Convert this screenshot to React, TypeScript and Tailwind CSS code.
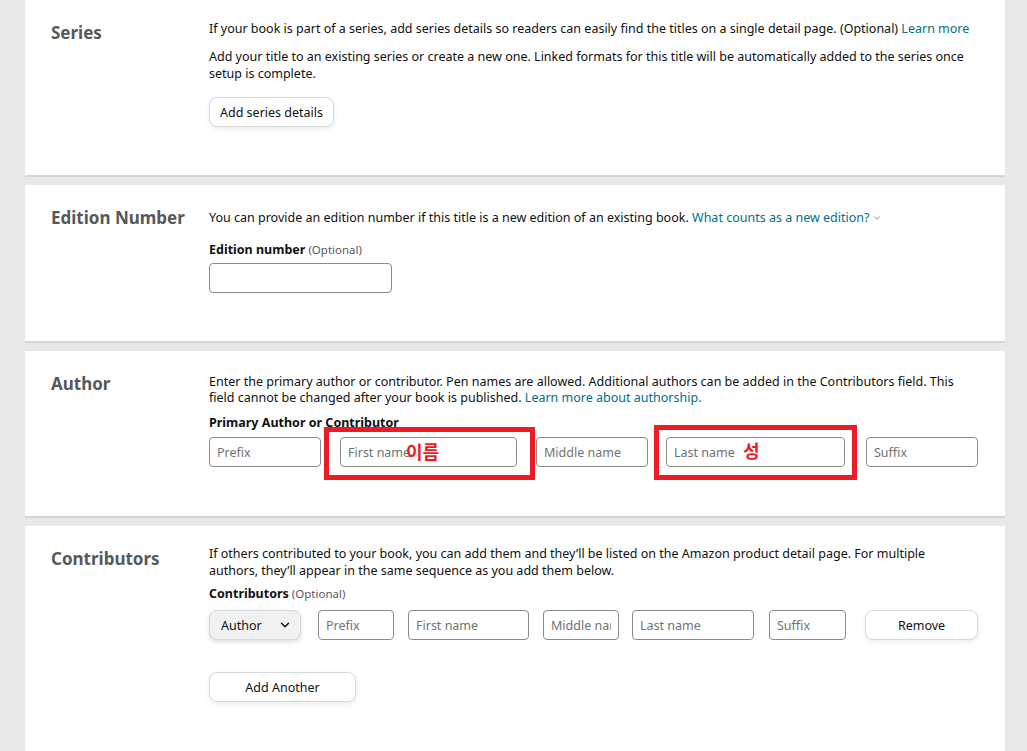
import { ChevronDown } from 'lucide-react';

const FONT = { fontFamily: '"Noto Sans", "Noto Sans CJK KR", sans-serif' };

function Card({
  title,
  children,
  className = '',
}: {
  title: string;
  children: React.ReactNode;
  className?: string;
}) {
  return (
    <section className={`flex bg-white border-b-2 border-[#d5d5d5] pl-[26px] pr-[27px] ${className}`}>
      <h2 className="w-[158px] shrink-0 pt-[21px] text-[17px] leading-[24px] font-bold text-[#565959]">
        {title}
      </h2>
      <div className="flex-1">{children}</div>
    </section>
  );
}

function TextInput({ placeholder, w }: { placeholder: string; w: string }) {
  return (
    <input
      placeholder={placeholder}
      className={`${w} h-[30px] shrink-0 rounded-[4px] border border-[#888c8c] bg-white px-[7px] text-[12.5px] text-[#0f1111] placeholder:text-[#6f7373] outline-none`}
    />
  );
}

function Button({ children, w }: { children: React.ReactNode; w: string }) {
  return (
    <button
      className={`${w} h-[30px] rounded-[8px] border border-[#d5d9d9] bg-white text-[12.5px] text-[#0f1111] shadow-[0_2px_5px_rgba(213,217,217,0.5)]`}
    >
      {children}
    </button>
  );
}

function Label({ bold, optional }: { bold: string; optional?: boolean }) {
  return (
    <p className="text-[12.5px] leading-[17px] text-[#0f1111]">
      <span className="font-bold">{bold}</span>
      {optional && <span className="text-[11.5px] text-[#565959]"> (Optional)</span>}
    </p>
  );
}

export default function App() {
  return (
    <div style={FONT} className="min-h-[751px] bg-[#e8e8e8] px-[25px] text-[12.5px] leading-[17px] text-[#0f1111]">
      <div className="w-[980px] flex flex-col gap-[8px]">
        {/* Series */}
        <Card title="Series" className="h-[177px]">
          <div className="pt-[20px]">
            <p>
              If your book is part of a series, add series details so readers can easily find the titles on a single
              detail page. (Optional) <a className="text-[#007185]">Learn more</a>
            </p>
            <p className="mt-[11px]">
              Add your title to an existing series or create a new one. Linked formats for this title will be
              automatically added to the series once setup is complete.
            </p>
            <div className="mt-[15px]">
              <Button w="w-[125px]">Add series details</Button>
            </div>
          </div>
        </Card>

        {/* Edition Number */}
        <Card title="Edition Number" className="h-[158px]">
          <div className="pt-[24px]">
            <p>
              You can provide an edition number if this title is a new edition of an existing book.{' '}
              <a className="text-[#007185]">
                What counts as a new edition?
                <ChevronDown className="inline-block ml-[3px] -mt-[2px] text-[#6f7373]" size={10} strokeWidth={2} />
              </a>
            </p>
            <div className="mt-[15px]">
              <Label bold="Edition number" optional />
            </div>
            <div className="mt-[5px]">
              <TextInput placeholder="" w="w-[183px]" />
            </div>
          </div>
        </Card>

        {/* Author */}
        <Card title="Author" className="h-[167px]">
          <div className="pt-[23px]">
            <p className="leading-[16px]">
              Enter the primary author or contributor. Pen names are allowed. Additional authors can be added in the
              Contributors field. This field cannot be changed after your book is published.{' '}
              <a className="text-[#007185]">Learn more about authorship.</a>
            </p>
            <div className="mt-[8px]">
              <Label bold="Primary Author or Contributor" />
            </div>
            <div className="relative mt-[6px] flex">
              <TextInput placeholder="Prefix" w="w-[112px]" />
              <div className="ml-[19px]">
                <TextInput placeholder="First name" w="w-[177px]" />
              </div>
              <div className="ml-[19px]">
                <TextInput placeholder="Middle name" w="w-[112px]" />
              </div>
              <div className="ml-[18px]">
                <TextInput placeholder="Last name" w="w-[179px]" />
              </div>
              <div className="ml-[21px]">
                <TextInput placeholder="Suffix" w="w-[112px]" />
              </div>

              {/* annotation overlays */}
              <div className="pointer-events-none absolute left-[115px] top-[-10px] h-[53px] w-[211px] border-[5px] border-[#ec1c24]" />
              <span className="pointer-events-none absolute left-[197px] top-[3px] text-[18px] leading-[24px] font-bold text-[#ec1c24]">
                이름
              </span>
              <div className="pointer-events-none absolute left-[445px] top-[-12px] h-[55px] w-[203px] border-[5px] border-[#ec1c24]" />
              <span className="pointer-events-none absolute left-[534px] top-[2px] text-[18px] leading-[24px] font-bold text-[#ec1c24]">
                성
              </span>
            </div>
          </div>
        </Card>

        {/* Contributors */}
        <Card title="Contributors" className="h-[240px] border-b-0">
          <div className="pt-[19px]">
            <p>
              If others contributed to your book, you can add them and they’ll be listed on the Amazon product detail
              page. For multiple
              <br />
              authors, they’ll appear in the same sequence as you add them below.
            </p>
            <div className="mt-[6px]">
              <Label bold="Contributors" optional />
            </div>
            <div className="mt-[8px] flex items-center">
              <div className="flex h-[30px] w-[92px] shrink-0 items-center justify-between rounded-[8px] border border-[#d5d9d9] bg-[#f0f2f2] pl-[11px] pr-[8px] text-[12.5px] shadow-[0_2px_5px_rgba(15,17,17,0.15)]">
                <span>Author</span>
                <ChevronDown size={14} strokeWidth={2.5} className="text-[#0f1111]" />
              </div>
              <div className="ml-[17px]">
                <TextInput placeholder="Prefix" w="w-[76px]" />
              </div>
              <div className="ml-[14px]">
                <TextInput placeholder="First name" w="w-[121px]" />
              </div>
              <div className="ml-[14px]">
                <TextInput placeholder="Middle name" w="w-[76px]" />
              </div>
              <div className="ml-[13px]">
                <TextInput placeholder="Last name" w="w-[122px]" />
              </div>
              <div className="ml-[15px]">
                <TextInput placeholder="Suffix" w="w-[77px]" />
              </div>
              <div className="ml-[19px]">
                <Button w="w-[113px]">Remove</Button>
              </div>
            </div>
            <div className="mt-[32px]">
              <Button w="w-[147px]">Add Another</Button>
            </div>
          </div>
        </Card>
      </div>
    </div>
  );
}
